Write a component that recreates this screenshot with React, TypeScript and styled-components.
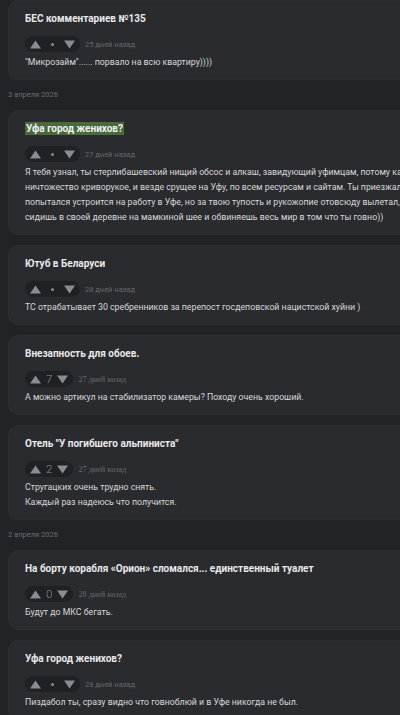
import React from "react";
import styled, { createGlobalStyle, css } from "styled-components";

const GlobalStyle = createGlobalStyle`
  html, body {
    margin: 0;
    padding: 0;
    background: #222327;
    overflow: hidden;
  }
  body {
    font-family: Roboto, "Liberation Sans", sans-serif;
    -webkit-font-smoothing: antialiased;
  }
`;

const Page = styled.div`
  width: 463px;
  padding: 0 0 0 8px;
  display: flex;
  flex-direction: column;
  gap: 10px;
`;

const DateLabel = styled.div`
  font-size: 7.5px;
  line-height: 10px;
  color: #6b6d72;
`;

const Card = styled.div`
  background: #2a2b2f;
  border: 1px solid #2e2f33;
  border-radius: 10px;
  padding: 8px 16px 9px;
`;

const Title = styled.div`
  font-size: 10px;
  line-height: 20px;
  font-weight: 700;
  color: #e8e8ea;
`;

const Highlight = styled.span`
  background: #4a6a3b;
  color: #f2f2f2;
  padding: 1px 1px;
`;

const Meta = styled.div`
  display: flex;
  align-items: center;
  margin-top: 7px;
  margin-bottom: 3px;
`;

const Pill = styled.div<{ $wide: boolean }>`
  display: inline-flex;
  align-items: center;
  height: 16px;
  border-radius: 8px;
  background: #202124;
  padding: 0 5px;
  gap: ${props => (props.$wide ? "10px" : "5px")};
`;

const Dot = styled.span`
  width: 3px;
  height: 3px;
  border-radius: 50%;
  background: #8a8c91;
`;

const Score = styled.span`
  font-size: 11.5px;
  font-weight: 300;
  color: #8a8c91;
  line-height: 16px;
`;

const Time = styled.span<{ $serif: boolean }>`
  font-size: 7.5px;
  color: #66686d;
  margin-left: 5px;
  ${props =>
    props.$serif &&
    css`
      font-family: "Liberation Serif", serif;
      font-size: 8.2px;
    `}
`;

const Body = styled.div`
  font-size: 8.75px;
  line-height: 15px;
  color: #d8d8da;
`;

const Arrow = ({ down }: { down?: boolean }) => (
  <svg width="11" height="9" viewBox="0 0 11 9">
    <path
      d={down ? "M0 0.5 H11 L5.5 8.5 Z" : "M5.5 0.5 L11 8.5 H0 Z"}
      fill="#8a8c91"
    />
  </svg>
);

interface Comment {
  title: string;
  highlight?: boolean;
  score?: number;
  time: string;
  body: string[];
}

type Item = { date: string } | Comment;

const items: Item[] = [
  {
    title: "БЕС комментариев №135",
    time: "25 дней назад",
    body: ["\"Микрозайм\"...... порвало на всю квартиру))))"]
  },
  { date: "3 апреля 2026" },
  {
    title: "Уфа город женихов?",
    highlight: true,
    time: "27 дней назад",
    body: [
      "Я тебя узнал, ты стерлибашевский нищий обсос и алкаш, завидующий уфимцам, потому как ты ничтожество криворукое, и везде срущее на Уфу, по всем ресурсам и сайтам. Ты приезжал в Уфу и попытался устроится на работу в Уфе, но за твою тупость и рукожопие отовсюду вылетал, сейчас сидишь в своей деревне на мамкиной шее и обвиняешь весь мир в том что ты говно))"
    ]
  },
  {
    title: "Ютуб в Беларуси",
    time: "28 дней назад",
    body: [
      "ТС отрабатывает 30 сребренников за перепост госдеповской нацистской хуйни )"
    ]
  },
  {
    title: "Внезапность для обоев.",
    score: 7,
    time: "27 дней назад",
    body: ["А можно артикул на стабилизатор камеры? Походу очень хороший."]
  },
  {
    title: "Отель \"У погибшего альпиниста\"",
    score: 2,
    time: "27 дней назад",
    body: ["Стругацких очень трудно снять.", "Каждый раз надеюсь что получится."]
  },
  { date: "2 апреля 2026" },
  {
    title: "На борту корабля «Орион» сломался... единственный туалет",
    score: 0,
    time: "28 дней назад",
    body: ["Будут до МКС бегать."]
  },
  {
    title: "Уфа город женихов?",
    time: "28 дней назад",
    body: ["Пиздабол ты, сразу видно что говноблюй и в Уфе никогда не был."]
  }
];

const CommentCard = ({ title, highlight, score, time, body }: Comment) => {
  const hasScore = score !== undefined;
  return (
    <Card>
      <Title>{highlight ? <Highlight>{title}</Highlight> : title}</Title>
      <Meta>
        <Pill $wide={!hasScore}>
          <Arrow />
          {hasScore ? <Score>{score}</Score> : <Dot />}
          <Arrow down />
        </Pill>
        <Time $serif={hasScore}>{time}</Time>
      </Meta>
      {body.map((line, i) => (
        <Body key={i}>{line}</Body>
      ))}
    </Card>
  );
};

export default function App() {
  return (
    <>
      <GlobalStyle />
      <Page>
        {items.map((item, i) =>
          "date" in item ? (
            <DateLabel key={i}>{item.date}</DateLabel>
          ) : (
            <CommentCard key={i} {...item} />
          )
        )}
      </Page>
    </>
  );
}
